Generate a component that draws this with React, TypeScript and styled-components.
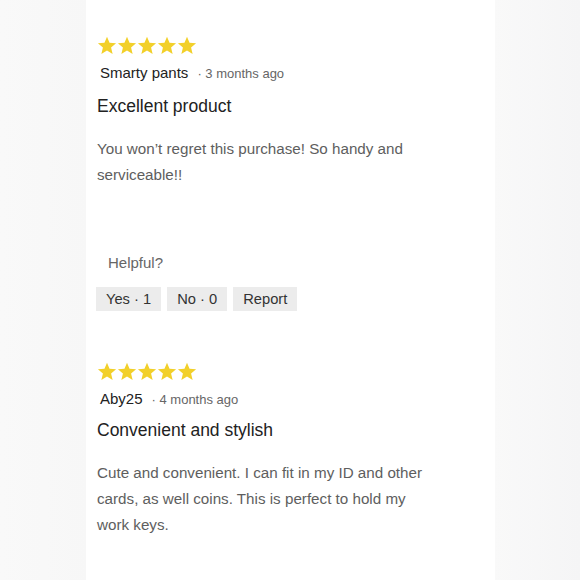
import React from "react";
import styled, { createGlobalStyle } from "styled-components";

const Global = createGlobalStyle`
  html, body { margin: 0; padding: 0; background: #f8f8f8; }
  body { font-family: "Liberation Sans", Arial, sans-serif; }
`;

const Page = styled.div`
  width: 580px;
  height: 580px;
  overflow: hidden;
  display: flex;
  background: linear-gradient(90deg, #f9f9f9 0%, #f7f7f7 15%, #f9f9f9 85%, #f5f5f6 100%);
`;

const Card = styled.div`
  margin-left: 86px;
  width: 409px;
  background: #ffffff;
  padding: 35px 0 0 11px;
  box-sizing: border-box;
  display: flex;
  flex-direction: column;
`;

const Review = styled.section<{ $gap: number }>`
  display: flex;
  flex-direction: column;
  margin-bottom: ${(p) => p.$gap}px;
`;

const Stars = styled.div`
  display: flex;
  height: 20px;
  align-items: center;
`;

const StarSvg = styled.svg`
  width: 20px;
  height: 19px;
  display: block;
`;

const Meta = styled.div`
  display: flex;
  align-items: baseline;
  margin-top: 8px;
  padding-left: 3px;
  line-height: 20px;
`;

const Author = styled.span`
  font-size: 15px;
  color: #222;
`;

const When = styled.span`
  font-size: 13px;
  color: #666;
  margin-left: 9px;
`;

const Title = styled.h3<{ $gap: number }>`
  margin: ${(p) => p.$gap}px 0 0;
  font-size: 17.5px;
  font-weight: 400;
  line-height: 24px;
  color: #222;
`;

const Body = styled.p`
  margin: 18px 0 0;
  font-size: 15.2px;
  line-height: 26px;
  color: #5e5e5e;
  width: 335px;
`;

const Helpful = styled.div`
  margin-top: 65px;
  padding-left: 11px;
  font-size: 15px;
  line-height: 20px;
  color: #666;
`;

const Actions = styled.div`
  display: flex;
  gap: 6px;
  margin-top: 14px;
  margin-left: -1px;
`;

const Btn = styled.button`
  height: 24px;
  padding: 0 10px;
  border: none;
  border-radius: 0;
  background: #ececec;
  color: #333;
  font-family: "Liberation Sans", Arial, sans-serif;
  font-size: 14.7px;
  line-height: 24px;
`;

const Star = () => (
  <StarSvg viewBox="0 0 24 23">
    <path
      d="M12 0.8l3.05 7.4 7.95 0.62-6.07 5.2 1.88 7.78L12 17.6l-6.81 4.2 1.88-7.78L1 8.82l7.95-0.62z"
      fill="#f2d02a"
    />
  </StarSvg>
);

const FiveStars = () => (
  <Stars>
    {[0, 1, 2, 3, 4].map((i) => (
      <Star key={i} />
    ))}
  </Stars>
);

export default function App() {
  return (
    <Page>
      <Global />
      <Card>
        <Review $gap={50}>
          <FiveStars />
          <Meta>
            <Author>Smarty pants</Author>
            <When>· 3 months ago</When>
          </Meta>
          <Title $gap={10}>Excellent product</Title>
          <Body>You won’t regret this purchase! So handy and serviceable!!</Body>
          <Helpful>Helpful?</Helpful>
          <Actions>
            <Btn>Yes · 1</Btn>
            <Btn>No · 0</Btn>
            <Btn>Report</Btn>
          </Actions>
        </Review>
        <Review $gap={0}>
          <FiveStars />
          <Meta>
            <Author>Aby25</Author>
            <When>· 4 months ago</When>
          </Meta>
          <Title $gap={8}>Convenient and stylish</Title>
          <Body>
            Cute and convenient. I can fit in my ID and other cards, as well coins. This is
            perfect to hold my work keys.
          </Body>
        </Review>
      </Card>
    </Page>
  );
}
